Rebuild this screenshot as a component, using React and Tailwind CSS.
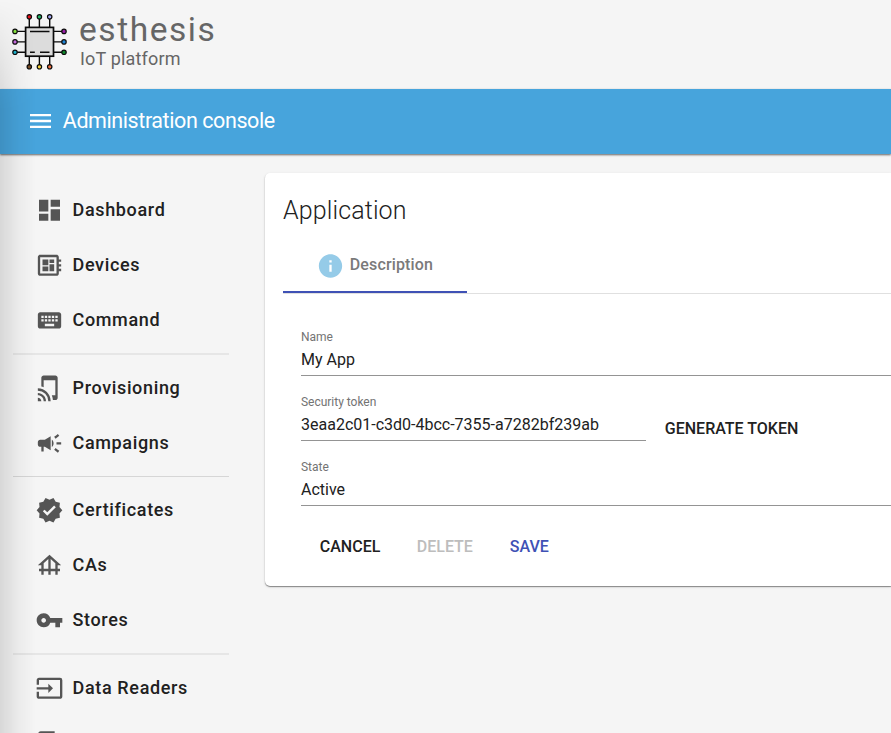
import {
  MdCampaign,
  MdContentCopy,
  MdDashboard,
  MdDeveloperBoard,
  MdFoundation,
  MdInfo,
  MdInput,
  MdKeyboard,
  MdMenu,
  MdTapAndPlay,
  MdVerified,
  MdVpnKey,
} from "react-icons/md";

const PINS = [
  { x: 29.3, y: 16.8, fill: "#e8141c" },
  { x: 39.4, y: 16.8, fill: "#22b566" },
  { x: 49.7, y: 16.8, fill: "#a3a6f0" },
  { x: 29.3, y: 66.8, fill: "#7a4f28" },
  { x: 39.4, y: 66.8, fill: "#f5d23c" },
  { x: 49.7, y: 66.8, fill: "#f07040" },
  { x: 15, y: 31.4, fill: "#86e53e" },
  { x: 15, y: 41.9, fill: "#c86ee0" },
  { x: 15, y: 52.3, fill: "#1fb4cf" },
  { x: 64, y: 31.4, fill: "#9a1fa8" },
  { x: 64, y: 41.9, fill: "#1e86d8" },
  { x: 64, y: 52.3, fill: "#0f8a2c" },
];

function ChipLogo() {
  return (
    <svg width="56" height="58" viewBox="12 13 56 58" fill="none" stroke="#0c0c0c">
      <path
        strokeWidth="1.4"
        d="M29.3 18v47M39.4 18v47M49.7 18v47M16 31.4h47M16 41.9h47M16 52.3h47"
      />
      <rect x="25.6" y="27.4" width="27.9" height="28.8" fill="#dcdcdc" strokeWidth="1.7" />
      <path strokeWidth="1.4" d="M30 31.5h19.5M30 52.2h4.8M40 52.2h9.5" />
      {PINS.map((p) => (
        <circle key={`${p.x}-${p.y}`} cx={p.x} cy={p.y} r="2.2" fill={p.fill} strokeWidth="1.2" />
      ))}
    </svg>
  );
}

const GROUPS = [
  [
    { label: "Dashboard", Icon: MdDashboard },
    { label: "Devices", Icon: MdDeveloperBoard },
    { label: "Command", Icon: MdKeyboard },
  ],
  [
    { label: "Provisioning", Icon: MdTapAndPlay },
    { label: "Campaigns", Icon: MdCampaign },
  ],
  [
    { label: "Certificates", Icon: MdVerified },
    { label: "CAs", Icon: MdFoundation },
    { label: "Stores", Icon: MdVpnKey },
  ],
  [
    { label: "Data Readers", Icon: MdInput },
    { label: "", Icon: MdContentCopy },
  ],
];

const DIVIDERS = ["h-[13px] pt-[6px]", "h-3 pt-[6px]", "h-[13px] pt-[6px]"];
const LINES = ["h-0.5 bg-[#e6e6e6]", "h-px bg-[#d6d6d6]", "h-0.5 bg-[#e6e6e6]"];

function Sidebar() {
  return (
    <nav className="w-[229px] shrink-0 pt-[28px] pl-[13px]">
      {GROUPS.map((items, g) => (
        <div key={g}>
          {items.map(({ label, Icon }) => (
            <div key={label} className="flex h-[55px] items-center pl-[22px]">
              <Icon
                className={
                  label
                    ? "size-7 shrink-0 translate-x-[0.5px] translate-y-[0.3px] text-[#555555]"
                    : "mt-0.5 ml-px size-7 shrink-0 text-[#555555]"
                }
              />
              <span className="ml-[9.5px] text-[18px] font-medium tracking-[0.65px] text-[#212121]">
                {label}
              </span>
            </div>
          ))}
          {g < GROUPS.length - 1 && (
            <div className={DIVIDERS[g]}>
              <div className={LINES[g]} />
            </div>
          )}
        </div>
      ))}
    </nav>
  );
}

function Field({ label, value }) {
  return (
    <div className="h-[65px]">
      <div className="h-[46px] border-b border-[#949494]">
        <div className="text-[12px] leading-[14px] tracking-[-0.02px] text-[#737373]">{label}</div>
        <div className="pt-[7px] text-[16px] leading-[18px] text-[#212121]">{value}</div>
      </div>
    </div>
  );
}

function ApplicationCard() {
  return (
    <section className="mt-[19px] ml-9 h-[413px] flex-1 rounded-l-[5px] bg-white pl-[18px] shadow-[0_1px_1px_rgba(0,0,0,0.4),0_1px_3px_rgba(0,0,0,0.12)]">
      <h1 className="pt-[23px] text-[25px] leading-[30px] font-light tracking-[0.12px] text-[#212121]">
        Application
      </h1>
      <div className="mt-[10px] flex h-[58px] border-b border-[#e0e0e0]">
        <div className="flex h-[57px] w-[184px] items-center border-b-2 border-[#3f51b5] pt-[3px] pl-[33px]">
          <MdInfo className="mt-px size-7 translate-x-[0.5px] text-[#95cbe8]" />
          <span className="-mt-px ml-[5.8px] text-[16px] font-medium tracking-[0.13px] text-[#7a7a7a]">
            Description
          </span>
        </div>
      </div>
      <div className="pt-9 pl-[18px]">
        <Field label="Name" value="My App" />
        <div className="flex">
          <div className="w-[345px]">
            <Field label="Security token" value="3eaa2c01-c3d0-4bcc-7355-a7282bf239ab" />
          </div>
          <button className="ml-[18.8px] h-[65px] pt-[3px] text-[16px] font-medium text-[#212121]">
            GENERATE TOKEN
          </button>
        </div>
        <Field label="State" value="Active" />
        <div className="mt-3 flex pl-[18.8px] text-[16px] leading-[20px] font-medium">
          <button className="w-[97px] text-left text-[#212121]">CANCEL</button>
          <button className="w-[93px] text-left text-[#bdbdbd]">DELETE</button>
          <button className="text-[#3f51b5]">SAVE</button>
        </div>
      </div>
    </section>
  );
}

export default function App() {
  return (
    <div className="relative h-[733px] w-full overflow-hidden bg-[#f5f5f5] font-[Roboto,sans-serif]">
      <header className="flex h-[89px] pt-[13px] pl-3">
        <ChipLogo />
        <div className="ml-[11px]">
          <div className="pb-px text-[33.5px] leading-[33px] tracking-[1.55px] text-[#666666]">
            esthesis
          </div>
          <div className="pl-px text-[18px] leading-[24px] tracking-[0.18px] text-[#666666]">
            IoT platform
          </div>
        </div>
      </header>
      <div className="relative flex h-[65px] items-center bg-[#47a4dc] pl-[26px] text-white shadow-[0_1px_2px_rgba(0,0,0,0.6)]">
        <MdMenu className="-mt-0.5 size-7 translate-x-[0.5px]" />
        <span className="-mt-0.5 ml-[8.8px] text-[21.5px] leading-[30px] tracking-[-0.42px]">
          Administration console
        </span>
      </div>
      <div className="flex">
        <Sidebar />
        <ApplicationCard />
      </div>
      <div className="pointer-events-none absolute inset-y-0 left-0 w-9 bg-linear-to-r from-black/12 via-black/4 to-transparent mask-[linear-gradient(to_bottom,transparent,black_110px)]" />
    </div>
  );
}
